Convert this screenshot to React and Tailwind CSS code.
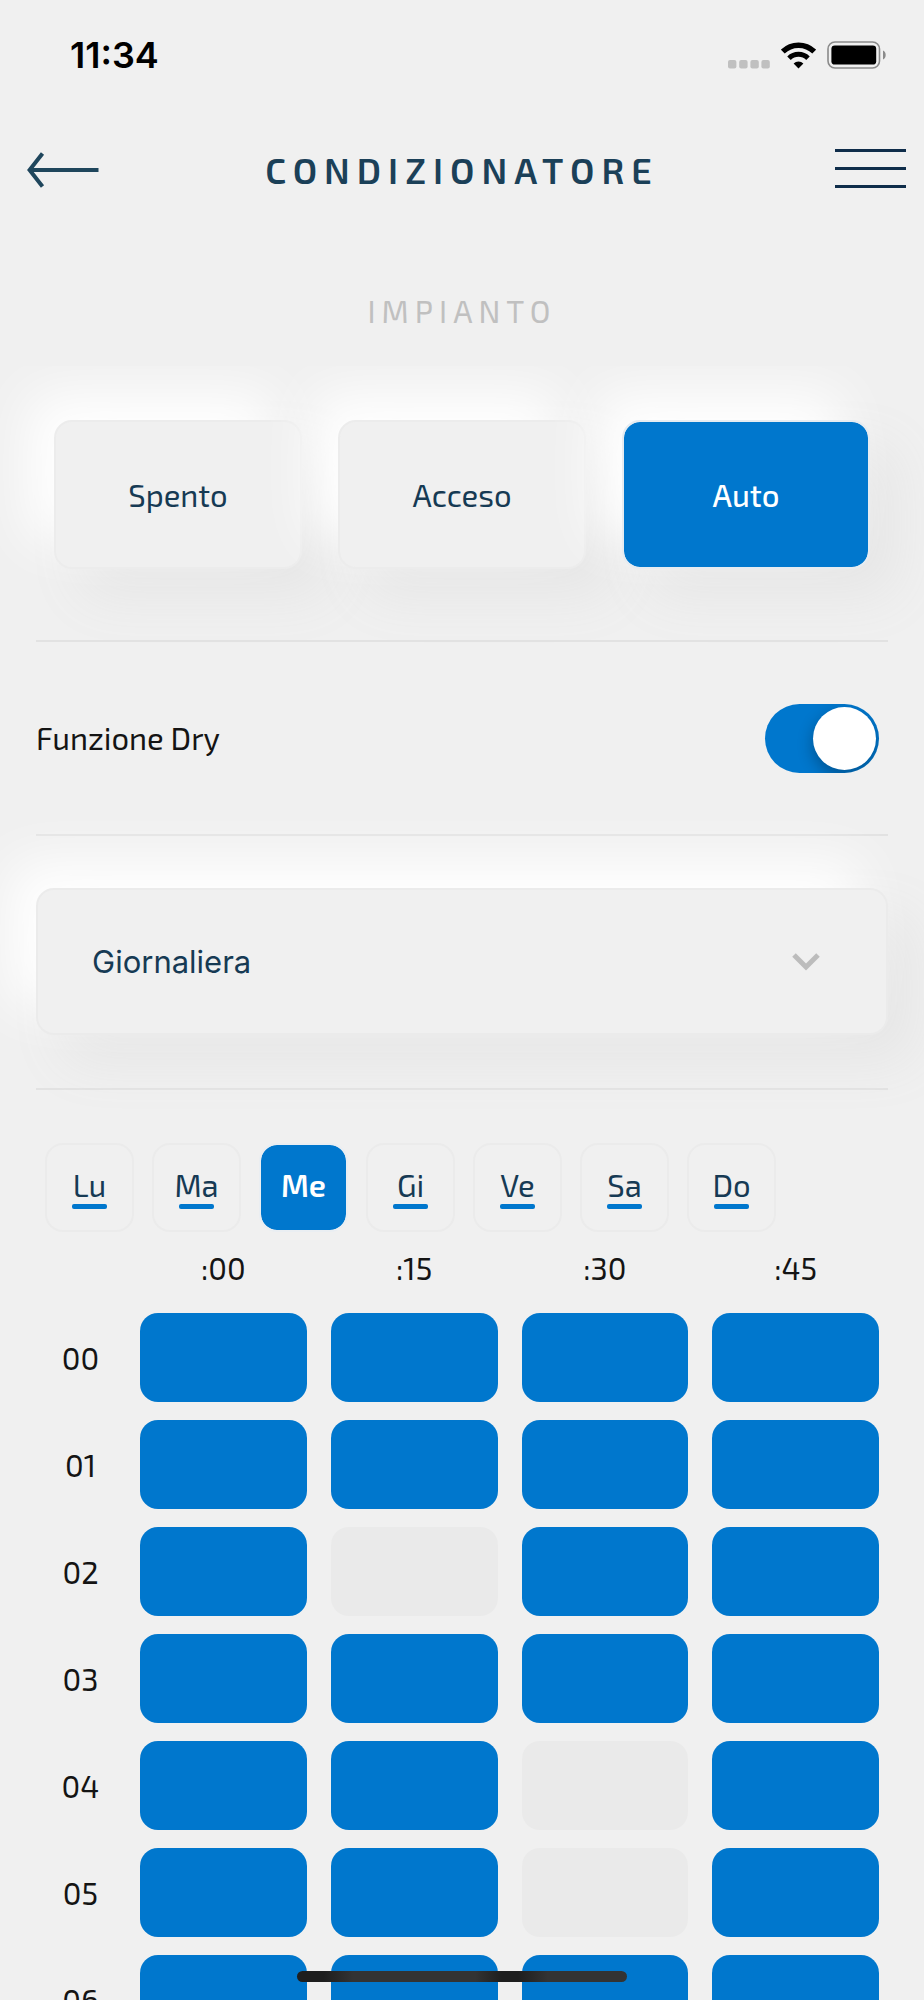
import { useState } from "react";
import clsx from "clsx";

const MODES = ["Spento", "Acceso", "Auto"];
const DAYS = ["Lu", "Ma", "Me", "Gi", "Ve", "Sa", "Do"];
const QUARTERS = [":00", ":15", ":30", ":45"];

// one row per hour, one flag per quarter
const SCHEDULE = [
  [true, true, true, true],
  [true, true, true, true],
  [true, false, true, true],
  [true, true, true, true],
  [true, true, false, true],
  [true, true, false, true],
  [true, true, true, true],
];

const StatusBar = () => (
  <div className="flex h-[110px] shrink-0 items-center justify-between pr-[37px] pl-[70px]">
    <span className="font-['Inter',sans-serif] text-[36px] leading-10 font-semibold text-black">11:34</span>
    <div className="flex items-center gap-[11px]">
      <svg width="42" height="27" viewBox="0 0 42 27" fill="#c0c0c0" aria-hidden="true">
        <rect x="0" y="18" width="8.4" height="8.4" rx="2" />
        <rect x="11.2" y="18" width="8.4" height="8.4" rx="2" />
        <rect x="22.4" y="18" width="8.4" height="8.4" rx="2" />
        <rect x="33.4" y="18" width="8.4" height="8.4" rx="2" />
      </svg>
      <svg width="35" height="27" viewBox="0 0 35 27" aria-hidden="true">
        <path d="M1.8 9.6 A22.4 22.4 0 0 1 33.2 9.6" fill="none" stroke="#000" strokeWidth="5.4" />
        <path d="M8 16.2 A13.6 13.6 0 0 1 27 16.2" fill="none" stroke="#000" strokeWidth="5" />
        <path d="M17.5 26.6 L12.6 21.6 A7 7 0 0 1 22.4 21.6 Z" fill="#000" />
      </svg>
      <svg width="60" height="28" viewBox="0 0 60 28" aria-hidden="true">
        <rect x="1" y="1" width="51.5" height="26" rx="7" fill="none" stroke="#8a8a8a" strokeWidth="1.6" />
        <rect x="4.4" y="4.4" width="44.8" height="19.2" rx="3.4" fill="#000" />
        <path d="M56 9.5 C59.6 11 59.6 17 56 18.5 Z" fill="#8a8a8a" />
      </svg>
    </div>
  </div>
);

const Header = () => (
  <header className="grid h-[120px] shrink-0 grid-cols-[1fr_auto_1fr] items-center px-[18px]">
    <button type="button" aria-label="Indietro" className="justify-self-start pl-[9px]">
      <svg width="72" height="36" viewBox="0 0 72 36" fill="none" stroke="#1f465c" strokeWidth="4">
        <path d="M15.5 1.5 L2.6 18 L15.5 34.5" />
        <path d="M3 18 H71.5" />
      </svg>
    </button>
    <h1 className="text-[36px] leading-10 font-semibold tracking-[7px] text-[#1b4058]">CONDIZIONATORE</h1>
    <button type="button" aria-label="Menu" className="justify-self-end pb-1">
      <svg width="71" height="39" viewBox="0 0 71 39" fill="none" stroke="#0f2d4a" strokeWidth="3">
        <path d="M0 1.5 H71 M0 19.5 H71 M0 37.5 H71" />
      </svg>
    </button>
  </header>
);

const Divider = () => <hr className="mx-9 h-[2px] border-0 bg-[#e2e2e2]" />;

const App = () => {
  const [mode, setMode] = useState("Auto");
  const [dry, setDry] = useState(true);
  const [day, setDay] = useState("Me");
  const [slots, setSlots] = useState(SCHEDULE);

  const toggleSlot = (hour, quarter) => {
    setSlots((prev) =>
      prev.map((row, h) => (h === hour ? row.map((on, q) => (q === quarter ? !on : on)) : row))
    );
  };

  return (
    <div className="relative flex h-screen flex-col overflow-hidden bg-[#f0f0f0] font-['Exo_2','Open_Sans',sans-serif] text-[31px] leading-10 text-[#141414]">
      <StatusBar />
      <Header />
      <h2 className="shrink-0 pt-[61px] pb-[35px] text-center tracking-[6px] text-[#c0c0c0]">IMPIANTO</h2>

      <main className="min-h-0 flex-1 overflow-y-auto [scrollbar-width:none]">
        <div className="grid grid-cols-3 gap-9 px-[54px] pt-[54px] pb-[71px]">
          {MODES.map((item) => (
            <button
              key={item}
              type="button"
              aria-pressed={mode === item}
              onClick={() => setMode(item)}
              className={clsx(
                "h-[149px] rounded-[18px] border-2 bg-clip-padding shadow-[-27px_-27px_54px_#ffffff,27px_27px_54px_#e6e6e6]",
                mode === item
                  ? "border-[#e6ecf1] bg-[#0077cd] font-medium text-white"
                  : "border-[#ececec] bg-[#f0f0f0] text-[#163a54]"
              )}
            >
              {item}
            </button>
          ))}
        </div>
        <Divider />

        <div className="flex h-[192px] items-center justify-between pr-[45px] pl-9">
          <label htmlFor="dry">Funzione Dry</label>
          <input
            id="dry"
            type="checkbox"
            role="switch"
            checked={dry}
            onChange={(e) => setDry(e.target.checked)}
            className="flex h-[69px] w-[114px] appearance-none items-center overflow-hidden rounded-full bg-[#d4d4d4] px-[3px] before:size-[63px] before:rounded-full before:bg-white before:shadow-[0_6px_16px_rgba(0,0,0,0.3)] before:content-[''] checked:justify-end checked:bg-[#0077cd]"
          />
        </div>
        <Divider />

        <div className="px-9 pt-[52px] pb-[53px]">
          <div className="relative">
            <select
              aria-label="Programmazione"
              defaultValue="Giornaliera"
              className="block h-[147px] w-full appearance-none rounded-[18px] border-2 border-[#ebebeb] bg-[#f0f0f0] pr-[100px] pl-[54px] font-['Inter',sans-serif] text-[31px] text-[#163a54] shadow-[-27px_-27px_54px_#ffffff,27px_27px_54px_#e6e6e6]"
            >
              <option>Giornaliera</option>
              <option>Settimanale</option>
            </select>
            <div className="pointer-events-none absolute inset-y-0 right-[68px] flex items-center">
              <svg width="28" height="18" viewBox="0 0 28 18" fill="none" stroke="#bcbcbc" strokeWidth="5" aria-hidden="true">
                <path d="M2 2 L14 14 L26 2" />
              </svg>
            </div>
          </div>
        </div>
        <Divider />

        <div className="flex gap-[18px] px-[45px] pt-[53px]">
          {DAYS.map((item) => (
            <button
              key={item}
              type="button"
              aria-pressed={day === item}
              onClick={() => setDay(item)}
              className={clsx(
                "flex size-[89px] flex-col items-center gap-[2px] rounded-[18px] border-2 bg-clip-padding pt-[23px] leading-[34px]",
                day === item
                  ? "border-[#eaeef2] bg-[#0077cd] font-semibold text-white"
                  : "border-[#ebebeb] text-[#163a54]"
              )}
            >
              {item}
              {day !== item && <span className="h-[5px] w-[35px] rounded-[2px] bg-[#0077cd]" />}
            </button>
          ))}
        </div>

        <div className="px-[21px]">
          <table className="w-full table-fixed border-separate border-spacing-x-6 border-spacing-y-[18px]">
            <thead>
              <tr className="h-[45px]">
                <td className="w-[71px] p-0" />
                {QUARTERS.map((q) => (
                  <th key={q} scope="col" className="p-0 align-top leading-9 font-normal">
                    {q}
                  </th>
                ))}
              </tr>
            </thead>
            <tbody>
              {slots.map((row, h) => {
                const hour = String(h).padStart(2, "0");
                return (
                  <tr key={hour}>
                    <th scope="row" className="p-0 font-normal">
                      {hour}
                    </th>
                    {row.map((on, q) => (
                      <td key={q} className="p-0">
                        <button
                          type="button"
                          aria-label={`${hour}${QUARTERS[q]}`}
                          aria-pressed={on}
                          onClick={() => toggleSlot(h, q)}
                          className={clsx("block h-[89px] w-full rounded-[18px]", on ? "bg-[#0077cd]" : "bg-[#eaeaea]")}
                        />
                      </td>
                    ))}
                  </tr>
                );
              })}
            </tbody>
          </table>
        </div>
      </main>

      {/* home indicator */}
      <div className="pointer-events-none absolute inset-x-0 bottom-[18px] flex justify-center">
        <div className="h-[11px] w-[330px] rounded-full bg-[linear-gradient(90deg,#1e1e1e_0%,#1e1e1e_8%,#333_17%,#333_54%,#1e1e1e_62%,#1e1e1e_67%,#333_76%)]" />
      </div>
    </div>
  );
};

export default App;
